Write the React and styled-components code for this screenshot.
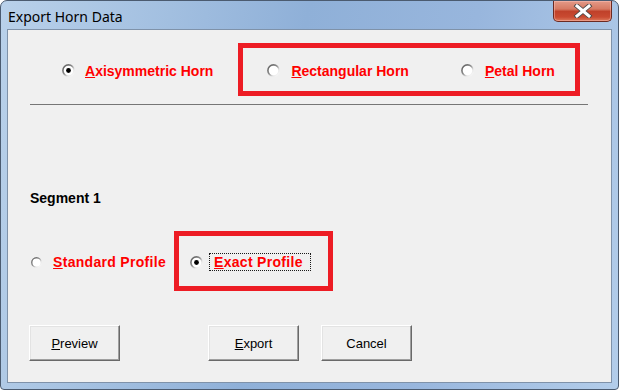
import React from 'react';
import styled, { createGlobalStyle } from 'styled-components';

const GlobalStyle = createGlobalStyle`
  html, body {
    margin: 0;
    padding: 0;
    background: #ffffff;
  }
`;

const Window = styled.div`
  width: 619px;
  height: 390px;
  box-sizing: border-box;
  border: 1px solid #4b5b70;
  border-radius: 7px 7px 4px 4px;
  background: linear-gradient(100deg, #b9d1ea 0%, #a2bfe0 25%, #8fb0d8 45%, #98b6dd 70%, #b3cdea 100%);
  display: flex;
  flex-direction: column;
  overflow: hidden;
`;

const TitleBar = styled.div`
  height: 28px;
  display: flex;
  align-items: flex-start;
  padding-left: 7px;
`;

const Title = styled.span`
  margin-top: 6px;
  font-family: "Noto Sans", "Open Sans", sans-serif;
  font-size: 14px;
  color: #000;
`;

const CloseButton = styled.div`
  margin-left: auto;
  margin-right: 6px;
  width: 59px;
  height: 21px;
  box-sizing: border-box;
  border: 1px solid #6b2a22;
  border-top: none;
  border-radius: 0 0 5px 5px;
  background: linear-gradient(180deg, #e39a88 0%, #d67a63 40%, #c0412a 52%, #c94a31 80%, #dc7a5c 100%);
  display: flex;
  align-items: center;
  justify-content: center;
  box-shadow: inset 0 0 0 1px rgba(255, 200, 190, 0.45);
`;

const Client = styled.div`
  flex: 1;
  margin: 0 6px 6px 6px;
  border: 1px solid #7f92a9;
  background: #f0f0f0;
  display: flex;
  flex-direction: column;
  font-family: "Liberation Sans", Arial, sans-serif;
`;

const TopRow = styled.div`
  margin-top: 13px;
  padding-left: 54px;
  display: flex;
  align-items: center;
`;

const Highlight = styled.div`
  box-sizing: border-box;
  height: ${p => p.$h}px;
  margin-left: ${p => p.$ml}px;
  border: 5px solid #ed1c24;
  padding: 0 ${p => p.$pr}px 0 ${p => p.$pl}px;
  display: flex;
  align-items: center;
  gap: ${p => p.$gap || 0}px;
`;

const Option = styled.label`
  display: flex;
  align-items: center;
  gap: ${p => p.$gap || 10}px;
  width: ${p => (p.$w ? `${p.$w}px` : 'auto')};
  margin-top: 2px;
`;

const Label = styled.span`
  font-size: 14px;
  font-weight: bold;
  color: #ff0000;
  line-height: 16px;
  white-space: nowrap;
  letter-spacing: ${p => p.$ls || 0}px;
  padding: ${p => (p.$focus ? '0 7px 0 4px' : '0')};
  outline: ${p => (p.$focus ? '1px dotted #1a1a1a' : 'none')};
`;

const Key = styled.span`
  text-decoration: underline;
`;

const Separator = styled.div`
  margin: 8px 0 0 22px;
  width: 558px;
  height: 1px;
  background: #767676;
`;

const SegmentTitle = styled.div`
  margin: 85px 0 0 22px;
  font-size: 14px;
  font-weight: bold;
  line-height: 16px;
  color: #000;
`;

const ProfileRow = styled.div`
  margin-top: 25px;
  padding-left: 23px;
  display: flex;
  align-items: center;
`;

const ButtonRow = styled.div`
  margin-top: 34px;
  padding-left: 21px;
  display: flex;
`;

const Button = styled.div`
  width: 91px;
  height: 36px;
  box-sizing: border-box;
  margin-left: ${p => p.$ml || 0}px;
  border: 1px solid;
  border-color: #ffffff #696969 #696969 #ffffff;
  box-shadow: inset -1px -1px 0 #a0a0a0, inset 1px 1px 0 #e3e3e3;
  background: #f0f0f0;
  display: flex;
  align-items: center;
  justify-content: center;
  font-size: 13px;
  color: #000;
`;

const Radio = ({ checked }) => (
  <svg width="13" height="13" viewBox="0 0 13 13">
    <defs>
      <linearGradient id="ring" x1="0" y1="0" x2="1" y2="1">
        <stop offset="0" stopColor="#5a5a5a" />
        <stop offset="0.45" stopColor="#8c8c8c" />
        <stop offset="0.7" stopColor="#e6e6e6" />
        <stop offset="1" stopColor="#ffffff" />
      </linearGradient>
    </defs>
    <circle cx="6.5" cy="6.5" r="5.6" fill="#ffffff" stroke="url(#ring)" strokeWidth="1.6" />
    {checked && <circle cx="6.5" cy="6.5" r="2.4" fill="#000" />}
  </svg>
);

const CloseGlyph = () => (
  <svg width="20" height="14" viewBox="0 0 20 14">
    <path d="M4 2 L16 12 M16 2 L4 12" stroke="#4a4a4a" strokeWidth="4.8" strokeLinecap="square" />
    <path d="M4 2 L16 12 M16 2 L4 12" stroke="#ffffff" strokeWidth="3" strokeLinecap="square" />
  </svg>
);

const App = () => {
  return (
    <>
      <GlobalStyle />
      <Window>
        <TitleBar>
          <Title>Export Horn Data</Title>
          <CloseButton>
            <CloseGlyph />
          </CloseButton>
        </TitleBar>
        <Client>
          <TopRow>
            <Option>
              <Radio checked />
              <Label><Key>A</Key>xisymmetric Horn</Label>
            </Option>
            <Highlight $h={53} $ml={25} $pl={24} $pr={20} $gap={52}>
              <Option $gap={11}>
                <Radio />
                <Label><Key>R</Key>ectangular Horn</Label>
              </Option>
              <Option $gap={11}>
                <Radio />
                <Label><Key>P</Key>etal Horn</Label>
              </Option>
            </Highlight>
          </TopRow>
          <Separator />
          <SegmentTitle>Segment 1</SegmentTitle>
          <ProfileRow>
            <Option $gap={11} $w={135}>
              <Radio />
              <Label $ls={0.3}><Key>S</Key>tandard Profile</Label>
            </Option>
            <Highlight $h={60} $ml={8} $pl={11} $pr={18}>
              <Option $gap={7}>
                <Radio checked />
                <Label $focus $ls={0.3}><Key>E</Key>xact Profile</Label>
              </Option>
            </Highlight>
          </ProfileRow>
          <ButtonRow>
            <Button><span><Key>P</Key>review</span></Button>
            <Button $ml={88}><span><Key>E</Key>xport</span></Button>
            <Button $ml={22}>Cancel</Button>
          </ButtonRow>
        </Client>
      </Window>
    </>
  );
};

export default App;
